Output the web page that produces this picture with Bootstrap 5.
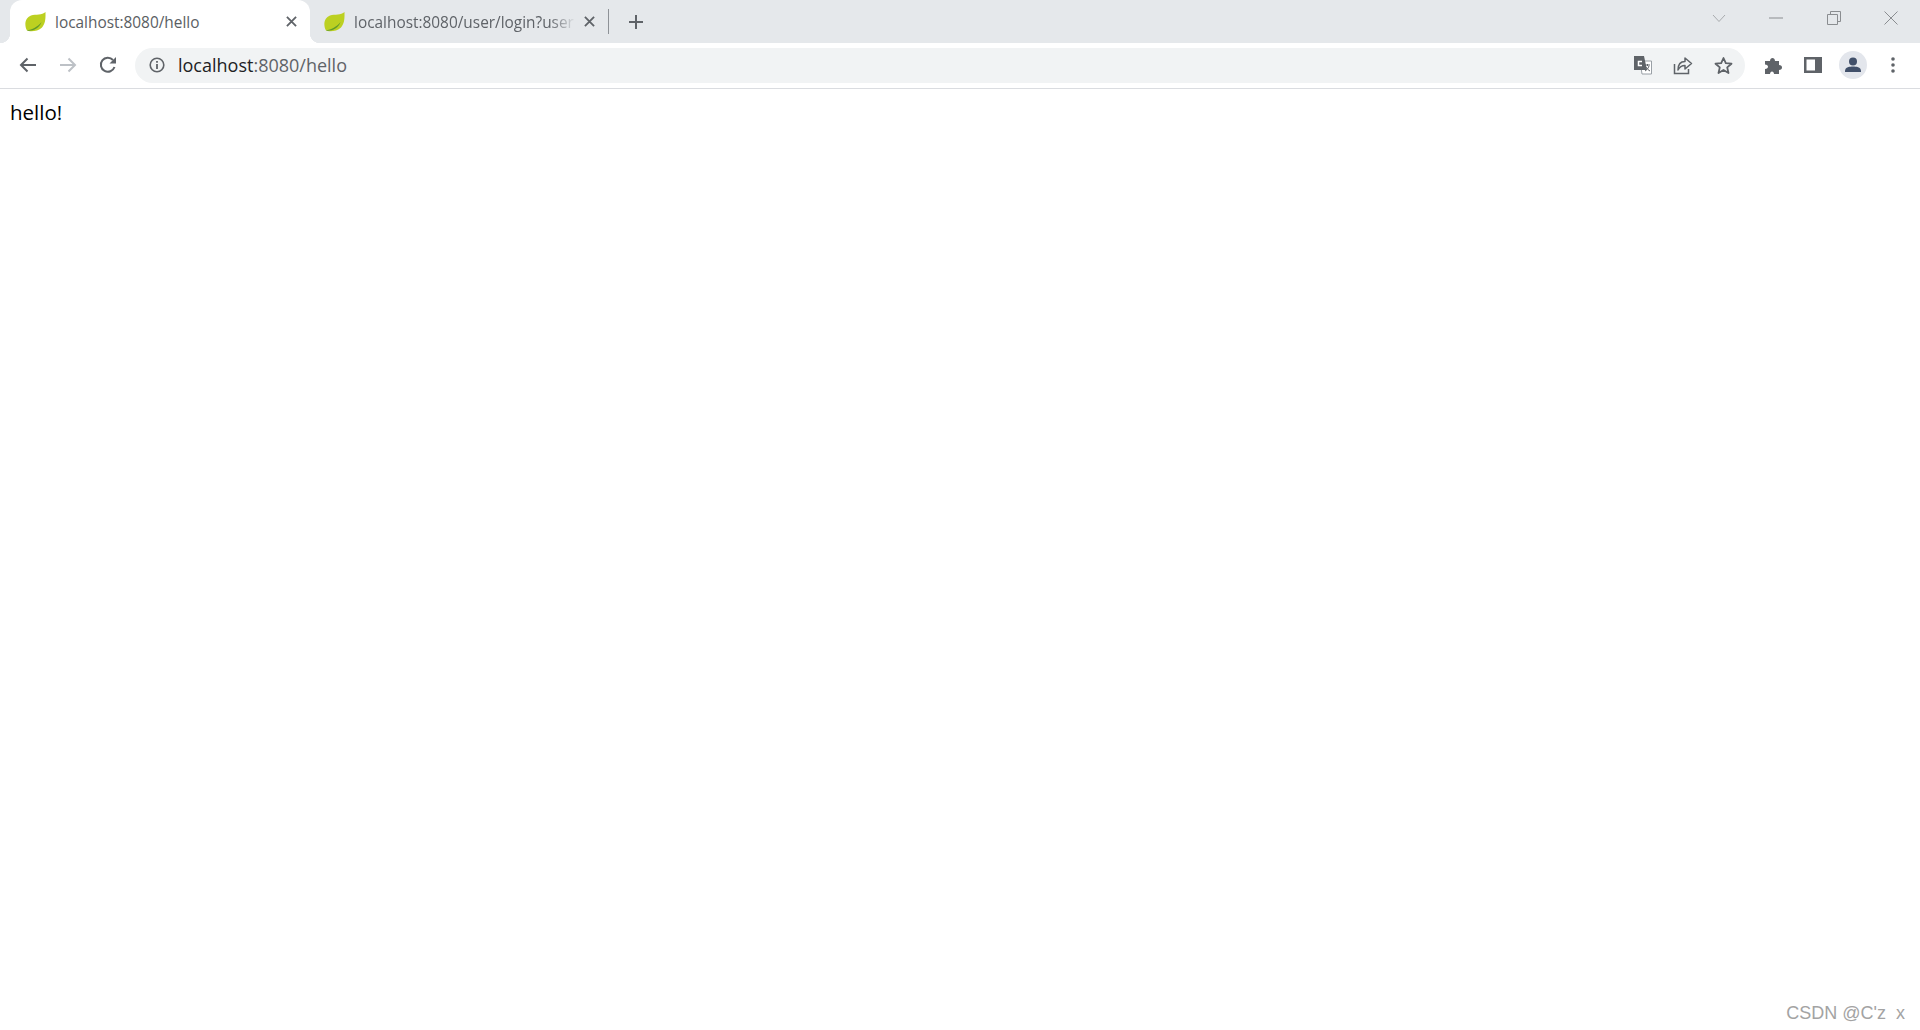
<!DOCTYPE html>
<html lang="en">
<head>
  <meta charset="UTF-8">
  <meta name="viewport" content="width=device-width, initial-scale=1.0">
  <title>localhost:8080/hello</title>
  <link rel="stylesheet" href="https://cdn.jsdelivr.net/npm/bootstrap@5.3.0/dist/css/bootstrap.min.css">
  <style>
    html, body { height: 100%; overflow: hidden; }
    body { background: #fff; font-family: "Open Sans", "Liberation Sans", sans-serif; }
    .tab-strip { height: 43px; background: #e5e8eb; padding-left: 10px; }
    .tab-item { height: 43px; width: 300px; padding: 0 13px 0 15px; font-size: 15.4px; color: #5f6368; }
    .tab-active { background: #fff; border-radius: 12px 12px 0 0; color: #5a5e63; position: relative; }
    .tab-active::before, .tab-active::after { content: ""; position: absolute; bottom: 0; width: 10px; height: 10px; }
    .tab-active::before { left: -10px; background: radial-gradient(circle at 0 0, #e5e8eb 10px, #fff 10.5px); }
    .tab-active::after { right: -10px; background: radial-gradient(circle at 100% 0, #e5e8eb 10px, #fff 10.5px); }
    .tab-label { flex: 1; margin-left: 9px; padding-top: 2px; white-space: nowrap; overflow: hidden; min-width: 0; }
    .tab-fade { -webkit-mask-image: linear-gradient(to right, #000 88%, transparent 100%); mask-image: linear-gradient(to right, #000 88%, transparent 100%); }
    .tab-second { width: 298px; padding: 0 13px 0 14px; }
    .tab-sep { width: 1px; height: 25px; background: #8e9297; }
    .new-tab { margin-left: 19px; }
    .win-controls { margin-left: auto; }
    .win-btn { width: 57.5px; height: 36px; }
    .tool-bar { height: 46px; padding: 0 0 1px 8px; border-bottom: 1px solid #dadce0; }
    .tool-btn { width: 40px; height: 34px; flex: none; }
    .addr-bar { width: 1610px; height: 35px; margin-left: 7px; background: #f1f3f4; border-radius: 18px; padding: 0 0 0 14px; }
    .addr-url { margin-left: 13px; font-size: 18px; color: #5f6368; }
    .addr-url b { font-weight: 400; color: #202124; }
    .addr-icons { margin-left: auto; margin-right: 2px; gap: 0; }
    .right-icons { margin-left: 8px; }
    .page-text { padding: 8px 10px; font-size: 20.5px; line-height: 31px; color: #000; font-family: "Open Sans", sans-serif; }
    .watermark { position: absolute; right: 15px; bottom: 3px; font-family: "Liberation Sans", sans-serif; font-size: 18px; color: #a3a3a3; white-space: pre; }
  </style>
</head>
<body>
  <div class="tab-strip d-flex align-items-center">
    <div class="tab-item tab-active d-flex align-items-center">
      <svg width="21" height="20" viewBox="0 0 21 20"><path d="M20.500 0C20.500 5 21 11 17 15.500C13 19.500 5 20 2 18.500C-1 13 0 6 6 3.500C11 2 17 3.500 20.500 0Z" fill="#bcd021"/><path d="M2 18.500C7 17.500 13 15 16.500 10C14.500 16.500 7 19.500 2 18.500Z" fill="#5f9a2c"/></svg>
      <span class="tab-label">localhost:8080/hello</span>
      <svg width="11" height="11" viewBox="0 0 12 12"><path d="M1 1L11 11M11 1L1 11" stroke="#5f6368" stroke-width="2"/></svg>
    </div>
    <div class="tab-item tab-second d-flex align-items-center">
      <svg width="21" height="20" viewBox="0 0 21 20"><path d="M20.500 0C20.500 5 21 11 17 15.500C13 19.500 5 20 2 18.500C-1 13 0 6 6 3.500C11 2 17 3.500 20.500 0Z" fill="#bcd021"/><path d="M2 18.500C7 17.500 13 15 16.500 10C14.500 16.500 7 19.500 2 18.500Z" fill="#5f9a2c"/></svg>
      <span class="tab-label tab-fade">localhost:8080/user/login?user</span>
      <svg class="ms-2" width="11" height="11" viewBox="0 0 12 12"><path d="M1 1L11 11M11 1L1 11" stroke="#5f6368" stroke-width="2"/></svg>
    </div>
    <div class="tab-sep"></div>
    <svg class="new-tab" width="16" height="16" viewBox="0 0 16 16"><path d="M8 1V15M1 8H15" stroke="#5f6368" stroke-width="2"/></svg>
    <div class="win-controls d-flex align-items-center align-self-start">
      <div class="win-btn d-flex align-items-center justify-content-center">
        <svg width="14" height="9" viewBox="0 0 14 9"><path d="M1 1L7 7.500L13 1" fill="none" stroke="#a8abae" stroke-width="1"/></svg>
      </div>
      <div class="win-btn d-flex align-items-center justify-content-center">
        <svg width="14" height="2" viewBox="0 0 14 2"><path d="M0 1H14" stroke="#8a8d90" stroke-width="1"/></svg>
      </div>
      <div class="win-btn d-flex align-items-center justify-content-center">
        <svg width="14" height="14" viewBox="0 0 14 14"><path d="M.5 3.500H10.500V13.500H.5ZM3.500 3.500V.5H13.500V10.500H10.500" fill="none" stroke="#8a8d90" stroke-width="1"/></svg>
      </div>
      <div class="win-btn d-flex align-items-center justify-content-center">
        <svg width="14" height="14" viewBox="0 0 14 14"><path d="M.5 .5L13.500 13.500M13.500 .5L.5 13.500" stroke="#8a8d90" stroke-width="1"/></svg>
      </div>
    </div>
  </div>

  <div class="tool-bar d-flex align-items-center">
    <div class="tool-btn d-flex align-items-center justify-content-center">
      <svg width="18" height="16" viewBox="0 0 18 16"><path d="M17 8H2M8.500 1.500L2 8L8.500 14.500" fill="none" stroke="#5f6368" stroke-width="2"/></svg>
    </div>
    <div class="tool-btn d-flex align-items-center justify-content-center">
      <svg width="18" height="16" viewBox="0 0 18 16"><path d="M1 8H16M9.500 1.500L16 8L9.500 14.500" fill="none" stroke="#bdc1c6" stroke-width="2"/></svg>
    </div>
    <div class="tool-btn d-flex align-items-center justify-content-center">
      <svg width="18" height="18" viewBox="0 0 18 18"><path d="M15.500 11A7 7 0 1 1 14 4" fill="none" stroke="#5f6368" stroke-width="2"/><path d="M17 1V7.500H10.500Z" fill="#5f6368"/></svg>
    </div>
    <div class="addr-bar d-flex align-items-center">
      <svg width="16" height="16" viewBox="0 0 16 16"><circle cx="8" cy="8" r="6.800" fill="none" stroke="#5f6368" stroke-width="1.600"/><path d="M8 7V12M8 4V5.800" stroke="#5f6368" stroke-width="1.800"/></svg>
      <span class="addr-url"><b>localhost</b>:8080/hello</span>
      <div class="addr-icons d-flex align-items-center">
        <div class="tool-btn d-flex align-items-center justify-content-center">
          <svg width="20" height="20" viewBox="0 0 20 20"><path d="M7 6H18.500V19H9Z" fill="#fff" stroke="#9aa0a6"/><path d="M1 1H11L14 15H1Z" fill="#5f6368"/><path d="M9 6.500H5.500V10.500H9" fill="none" stroke="#fff" stroke-width="1.500"/><path d="M12 10H17M14.500 9V11M16 11C15 14 13.500 15 12 16M13 12C14 14 15.500 15 17 16" fill="none" stroke="#5f6368"/></svg>
        </div>
        <div class="tool-btn d-flex align-items-center justify-content-center">
          <svg width="20" height="20" viewBox="0 0 20 20"><path d="M1.500 9V18.500H15.500V14" fill="none" stroke="#5f6368" stroke-width="1.500"/><path d="M5 15C5 9 8 6.500 12 6.500V3L18.500 8.500L12 14V10.500C9 10.500 6.500 12 5 15Z" fill="none" stroke="#5f6368" stroke-width="1.500" stroke-linejoin="round"/></svg>
        </div>
        <div class="tool-btn d-flex align-items-center justify-content-center">
          <svg width="19" height="19" viewBox="0 0 19 19"><path d="M9.500 2L11.800 7.200L17.500 7.700L13.200 11.400L14.500 17L9.500 14L4.500 17L5.800 11.400L1.500 7.700L7.200 7.200Z" fill="none" stroke="#5f6368" stroke-width="1.800" stroke-linejoin="round"/></svg>
        </div>
      </div>
    </div>
    <div class="right-icons d-flex align-items-center">
      <div class="tool-btn d-flex align-items-center justify-content-center">
        <svg width="19" height="19" viewBox="0 0 19 19"><path d="M1 5H6C6 1 11 1 11 5H15V9C19 9 19 14 15 14V18H10C10 14.500 6 14.500 6 18H1V13C5 13 5 8.500 1 8.500Z" fill="#5f6368"/></svg>
      </div>
      <div class="tool-btn d-flex align-items-center justify-content-center">
        <svg width="18" height="16" viewBox="0 0 18 16"><path d="M0 0H18V16H0ZM2.500 2.500V13.500H11V2.500Z" fill="#5f6368" fill-rule="evenodd"/></svg>
      </div>
      <div class="tool-btn d-flex align-items-center justify-content-center">
        <svg width="28" height="28" viewBox="0 0 28 28"><circle cx="14" cy="14" r="14" fill="#e3e6ec"/><circle cx="14" cy="10.500" r="4" fill="#41506a"/><path d="M6 20C6 16 11 15.500 14 15.500C17 15.500 22 16 22 20V21H6Z" fill="#41506a"/></svg>
      </div>
      <div class="tool-btn d-flex align-items-center justify-content-center">
        <svg width="4" height="16" viewBox="0 0 4 16"><circle cx="2" cy="2" r="1.800" fill="#5f6368"/><circle cx="2" cy="8" r="1.800" fill="#5f6368"/><circle cx="2" cy="14" r="1.800" fill="#5f6368"/></svg>
      </div>
    </div>
  </div>

  <div class="page-text">hello!</div>
  <div class="watermark">CSDN @C'z  x</div>

  <script src="https://cdn.jsdelivr.net/npm/bootstrap@5.3.0/dist/js/bootstrap.bundle.min.js"></script>
</body>
</html>
